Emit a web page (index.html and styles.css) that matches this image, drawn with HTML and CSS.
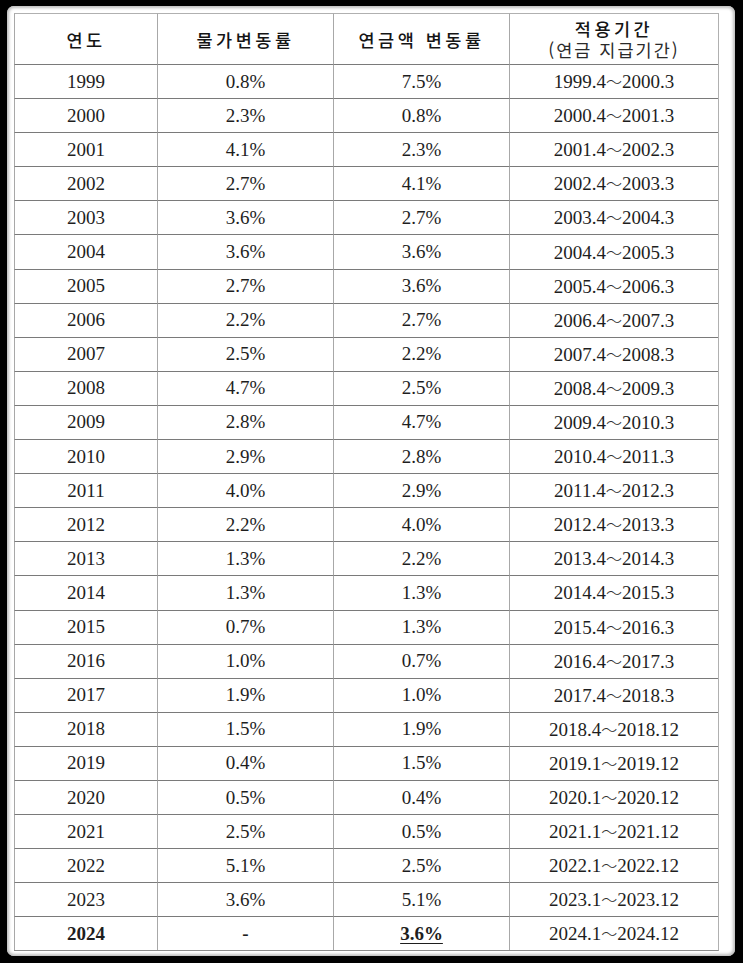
FILE: index.html
```html
<!DOCTYPE html>
<html lang="ko">
<head>
<meta charset="utf-8">
<link rel="stylesheet" href="styles.css">
</head>
<body>
<div class="paper">
<table class="rates">
<colgroup><col class="c1"><col class="c2"><col class="c3"><col class="c4"></colgroup>
<thead>
<tr class="head"><th>연도</th><th>물가변동률</th><th>연금액 변동률</th><th><span class="l1">적용기간</span><span class="l2">(연금 지급기간)</span></th></tr>
</thead>
<tbody>
<tr><td>1999</td><td>0.8%</td><td>7.5%</td><td>1999.4<span class="t">～</span>2000.3</td></tr>
<tr><td>2000</td><td>2.3%</td><td>0.8%</td><td>2000.4<span class="t">～</span>2001.3</td></tr>
<tr><td>2001</td><td>4.1%</td><td>2.3%</td><td>2001.4<span class="t">～</span>2002.3</td></tr>
<tr><td>2002</td><td>2.7%</td><td>4.1%</td><td>2002.4<span class="t">～</span>2003.3</td></tr>
<tr><td>2003</td><td>3.6%</td><td>2.7%</td><td>2003.4<span class="t">～</span>2004.3</td></tr>
<tr><td>2004</td><td>3.6%</td><td>3.6%</td><td>2004.4<span class="t">～</span>2005.3</td></tr>
<tr><td>2005</td><td>2.7%</td><td>3.6%</td><td>2005.4<span class="t">～</span>2006.3</td></tr>
<tr><td>2006</td><td>2.2%</td><td>2.7%</td><td>2006.4<span class="t">～</span>2007.3</td></tr>
<tr><td>2007</td><td>2.5%</td><td>2.2%</td><td>2007.4<span class="t">～</span>2008.3</td></tr>
<tr><td>2008</td><td>4.7%</td><td>2.5%</td><td>2008.4<span class="t">～</span>2009.3</td></tr>
<tr><td>2009</td><td>2.8%</td><td>4.7%</td><td>2009.4<span class="t">～</span>2010.3</td></tr>
<tr><td>2010</td><td>2.9%</td><td>2.8%</td><td>2010.4<span class="t">～</span>2011.3</td></tr>
<tr><td>2011</td><td>4.0%</td><td>2.9%</td><td>2011.4<span class="t">～</span>2012.3</td></tr>
<tr><td>2012</td><td>2.2%</td><td>4.0%</td><td>2012.4<span class="t">～</span>2013.3</td></tr>
<tr><td>2013</td><td>1.3%</td><td>2.2%</td><td>2013.4<span class="t">～</span>2014.3</td></tr>
<tr><td>2014</td><td>1.3%</td><td>1.3%</td><td>2014.4<span class="t">～</span>2015.3</td></tr>
<tr><td>2015</td><td>0.7%</td><td>1.3%</td><td>2015.4<span class="t">～</span>2016.3</td></tr>
<tr><td>2016</td><td>1.0%</td><td>0.7%</td><td>2016.4<span class="t">～</span>2017.3</td></tr>
<tr><td>2017</td><td>1.9%</td><td>1.0%</td><td>2017.4<span class="t">～</span>2018.3</td></tr>
<tr><td>2018</td><td>1.5%</td><td>1.9%</td><td>2018.4<span class="t">～</span>2018.12</td></tr>
<tr><td>2019</td><td>0.4%</td><td>1.5%</td><td>2019.1<span class="t">～</span>2019.12</td></tr>
<tr><td>2020</td><td>0.5%</td><td>0.4%</td><td>2020.1<span class="t">～</span>2020.12</td></tr>
<tr><td>2021</td><td>2.5%</td><td>0.5%</td><td>2021.1<span class="t">～</span>2021.12</td></tr>
<tr><td>2022</td><td>5.1%</td><td>2.5%</td><td>2022.1<span class="t">～</span>2022.12</td></tr>
<tr><td>2023</td><td>3.6%</td><td>5.1%</td><td>2023.1<span class="t">～</span>2023.12</td></tr>
<tr class="last"><td class="b">2024</td><td class="b">-</td><td class="b u">3.6%</td><td>2024.1<span class="t">～</span>2024.12</td></tr>
</tbody>
</table>
</div>
</body>
</html>
```
FILE: styles.css
```css
html, body {
  margin: 0;
  padding: 0;
  background: #000;
}
body {
  width: 743px;
  height: 963px;
  overflow: hidden;
}
.paper {
  margin: 6px 0 0 7px;
  width: 728px;
  height: 950px;
  box-sizing: border-box;
  padding: 7px 0 0 7px;
  background: #fff;
  border-radius: 7px;
  box-shadow: inset 0 0 3px 2px #bdbdbd;
}
.rates {
  table-layout: fixed;
  border-collapse: separate;
  border-spacing: 0;
  width: 704px;
  border-right: 1px solid #b0b0b0;
  border-bottom: 1px solid #8a8a8a;
  font-family: "Liberation Serif", serif;
  font-size: 19px;
  color: #1e1e1e;
}
.c1 { width: 143px; }
.c2 { width: 176px; }
.c3 { width: 176px; }
.c4 { width: 209px; }
.rates th, .rates td {
  border-left: 1px solid #a8a8a8;
  border-top: 1px solid #7a7a7a;
  padding: 0;
  text-align: center;
  vertical-align: middle;
  box-sizing: border-box;
}
.rates th {
  border-top: 1px solid #b0b0b0;
  font-family: "Noto Sans CJK KR", sans-serif;
  font-weight: 500;
  font-size: 17.5px;
  letter-spacing: 3.5px;
  color: #151515;
  height: 51px;
  line-height: 21px;
}
.rates th .l1, .rates th .l2 {
  display: block;
}
.rates th .l2 {
  letter-spacing: 2px;
  font-weight: 400;
  color: #2a2a2a;
}
.rates td {
  height: 34.1px;
  line-height: 20px;
}
.t {
  font-family: "Noto Sans CJK KR", sans-serif;
  font-size: 16px;
  font-weight: 300;
  color: #333;
}
.b { font-weight: 700; }
.u { text-decoration: underline; text-underline-offset: 3px; }
```
